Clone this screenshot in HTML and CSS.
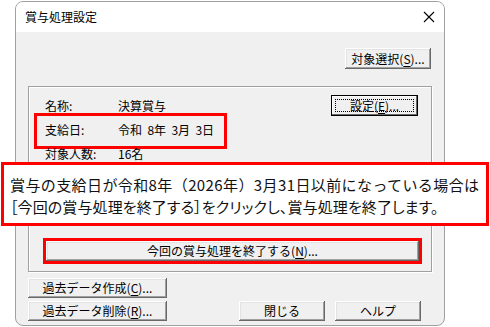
FILE: index.html
```html
<!DOCTYPE html>
<html lang="ja">
<head>
    <meta charset="UTF-8">
    <title>賞与処理設定</title>
    <link rel="stylesheet" href="styles.css">
</head>
<body>
    <div class="dialog">
        <div class="titlebar">
            <span class="title">賞与処理設定</span>
            <svg class="close" width="12" height="12" viewBox="0 0 12 12">
                <path d="M1 1 L11 11 M11 1 L1 11" stroke="#000" stroke-width="1.1" fill="none"/>
            </svg>
        </div>

        <div class="body">
            <div class="top-row">
                <button class="btn btn-select">対象選択(<u>S</u>)...</button>
            </div>

            <div class="group">
                <div class="info">
                    <div class="rows">
                        <div class="row"><span class="label">名称:</span><span>決算賞与</span></div>
                        <div class="row mark"><span class="label">支給日:</span><span>令和&nbsp;&nbsp;8年&nbsp;&nbsp;3月&nbsp;&nbsp;3日</span></div>
                        <div class="row"><span class="label">対象人数:</span><span>16名</span></div>
                    </div>
                    <button class="btn btn-default"><span class="focus">設定(<u>E</u>)...</span></button>
                </div>
                <button class="btn btn-finish">今回の賞与処理を終了する(<u>N</u>)...</button>
            </div>

            <div class="bottom">
                <button class="btn btn-wide">過去データ作成(<u>C</u>)...</button>
                <div class="bottom-row">
                    <button class="btn btn-wide">過去データ削除(<u>R</u>)...</button>
                    <div class="actions">
                        <button class="btn btn-small">閉じる</button>
                        <button class="btn btn-small">ヘルプ</button>
                    </div>
                </div>
            </div>
        </div>
    </div>

    <div class="callout">
        <p class="line-1">賞与の支給日が令和8年（2026年）3月31日以前になっている場合は</p>
        <p class="line-2">［今回の賞与処理を終了する］をクリックし、賞与処理を終了します。</p>
    </div>
</body>
</html>
```

FILE: styles.css
```css
* {
    box-sizing: border-box;
}
body {
    margin: 0;
    width: 490px;
    height: 327px;
    background: #fff;
    font-family: "Noto Sans CJK JP", "DejaVu Sans", sans-serif;
    font-size: 12px;
    color: #000;
    position: relative;
    overflow: hidden;
}
.dialog {
    margin: 1px 0 0 15px;
    width: 430px;
    height: 325px;
    border: 1px solid #a0a0a0;
    border-radius: 8px;
    background: #f0f0f0;
    overflow: hidden;
}
.titlebar {
    height: 30px;
    background: #fff;
    display: flex;
    align-items: center;
    justify-content: space-between;
    padding: 0 9px 2px 9px;
}
.title {
    font-size: 12px;
}
.close {
    margin-top: 1px;
}
.body {
    padding: 16px 12px 0 12px;
}
.top-row {
    display: flex;
    justify-content: flex-end;
    padding-right: 1px;
}
.btn {
    font-family: inherit;
    font-size: 12px;
    color: #000;
    background: #f0f0f0;
    border: none;
    padding: 0;
    height: 21px;
    line-height: 21px;
    box-shadow: inset -1px -1px #696969, inset 1px 1px #fff, inset -2px -2px #a0a0a0, inset 2px 2px #e3e3e3;
}
.btn u {
    text-decoration-thickness: 1px;
    text-underline-offset: 2px;
}
.btn-select {
    width: 86px;
}
.group {
    margin-top: 17px;
    height: 186px;
    border: 1px solid #a0a0a0;
    box-shadow: 1px 1px 0 #fff, inset 1px 1px 0 #fff;
    padding: 7px 13px 0 16px;
}
.info {
    display: flex;
    justify-content: space-between;
    align-items: flex-start;
}
.row {
    height: 24px;
    line-height: 24px;
    display: flex;
    position: relative;
}
.label {
    width: 73px;
}
.mark::after {
    content: "";
    position: absolute;
    left: -11px;
    top: -5px;
    width: 187px;
    height: 30px;
    border: 3px solid #f00;
}
.btn-default {
    width: 87px;
    margin-top: 1px;
    padding: 3px;
    border: 1px solid #000;
    box-shadow: inset -1px -1px #696969, inset 1px 1px #fff;
}
.focus {
    display: block;
    height: 13px;
    line-height: 12px;
    border: 1px dotted #000;
}
.btn-finish {
    display: block;
    width: 373px;
    height: 20px;
    line-height: 20px;
    margin: 75px 0 0 1px;
    outline: 3px solid #f00;
}
.bottom {
    margin-top: 6px;
    display: flex;
    flex-direction: column;
    gap: 3px;
}
.btn-wide {
    width: 139px;
    height: 20px;
    line-height: 20px;
}
.bottom-row {
    display: flex;
    justify-content: space-between;
    padding-right: 11px;
}
.actions {
    display: flex;
    gap: 10px;
}
.btn-small {
    width: 86px;
    height: 20px;
    line-height: 20px;
}
.callout {
    position: absolute;
    left: 1px;
    top: 162px;
    width: 488px;
    height: 64px;
    background: #fff;
    border: 3px solid #f00;
    padding: 9px 0 0 6px;
    font-size: 15px;
    color: #111;
}
.callout p {
    margin: 0;
    line-height: 22px;
    white-space: nowrap;
}
.line-1 {
    letter-spacing: 0.4px;
}
.line-2 {
    font-feature-settings: "palt";
    letter-spacing: 0.1px;
}
```
